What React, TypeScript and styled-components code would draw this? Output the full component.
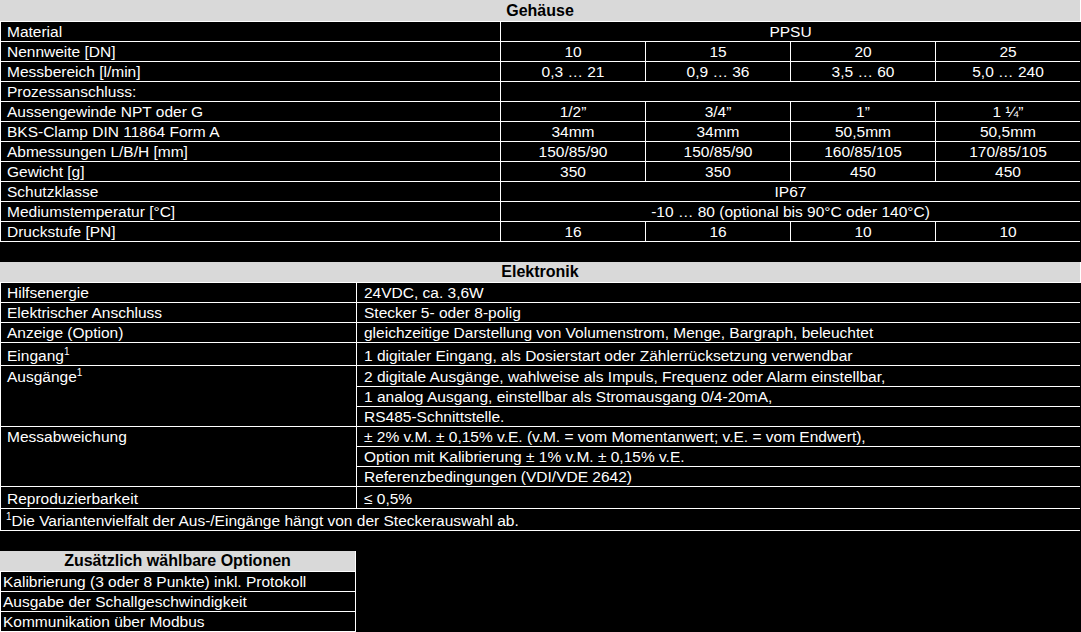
import React, { Fragment } from 'react'
import styled, { createGlobalStyle } from 'styled-components'

const GlobalStyle = createGlobalStyle`
  html, body {
    margin: 0;
    padding: 0;
    background: #000;
  }
  body {
    font-family: 'Liberation Sans', Arial, sans-serif;
    color: #fff;
  }
`

const Sheet = styled.div`
  width: 1081px;
  height: 632px;
  overflow: hidden;
`

const SectionHeader = styled.div<{ $width: number; $height: number }>`
  box-sizing: border-box;
  width: ${({ $width }) => $width}px;
  height: ${({ $height }) => $height + 1}px;
  background: #d9d9d9;
  border-bottom: 1px solid #fff;
  border-right: 1px solid #fff;
  color: #000;
  font-size: 16px;
  font-weight: bold;
  line-height: ${({ $height }) => $height}px;
  text-align: center;
`

const Grid = styled.div<{ $columns: string; $rows: string; $width: number }>`
  box-sizing: border-box;
  display: grid;
  grid-template-columns: ${({ $columns }) => $columns};
  grid-template-rows: ${({ $rows }) => $rows};
  gap: 1px;
  width: ${({ $width }) => $width}px;
  padding-left: 1px;
  border-bottom: 1px solid #fff;
  background: #fff;
`

const OptionsGrid = styled(Grid)`
  padding-right: 1px;
`

// rows taller than 19px keep their text at the bottom, as the sheet does
const Cell = styled.div<{
  $center?: boolean
  $span?: number
  $rowSpan?: number
  $pad?: number
  $shift?: number
}>`
  box-sizing: border-box;
  background: #000;
  font-size: 15.5px;
  line-height: 19px;
  white-space: nowrap;
  overflow: hidden;
  text-align: ${({ $center }) => ($center ? 'center' : 'left')};
  padding-left: ${({ $center, $pad }) => ($center ? 0 : $pad ?? 6)}px;
  padding-top: ${({ $shift }) => $shift ?? 0}px;
  grid-column: span ${({ $span }) => $span ?? 1};
  grid-row: span ${({ $rowSpan }) => $rowSpan ?? 1};
`

const Sup = styled.sup`
  font-size: 10px;
  line-height: 0;
  vertical-align: 6px;
`

const Spacer = styled.div<{ $height: number }>`
  height: ${({ $height }) => $height}px;
`

type HousingRow = [string, ...string[]]

const housing: HousingRow[] = [
  ['Material', 'PPSU'],
  ['Nennweite [DN]', '10', '15', '20', '25'],
  ['Messbereich [l/min]', '0,3 … 21', '0,9 … 36', '3,5 … 60', '5,0 … 240'],
  ['Prozessanschluss:', ''],
  ['Aussengewinde NPT oder G', '1/2”', '3/4”', '1”', '1 ¼”'],
  ['BKS-Clamp DIN 11864 Form A', '34mm', '34mm', '50,5mm', '50,5mm'],
  ['Abmessungen L/B/H [mm]', '150/85/90', '150/85/90', '160/85/105', '170/85/105'],
  ['Gewicht [g]', '350', '350', '450', '450'],
  ['Schutzklasse', 'IP67'],
  ['Mediumstemperatur [°C]', '-10 … 80 (optional bis 90°C oder 140°C)'],
  ['Druckstufe [PN]', '16', '16', '10', '10'],
]

const electronics: { label: string; note?: boolean; shift?: number; values: string[] }[] = [
  { label: 'Hilfsenergie', values: ['24VDC, ca. 3,6W'] },
  { label: 'Elektrischer Anschluss', values: ['Stecker 5- oder 8-polig'] },
  {
    label: 'Anzeige (Option)',
    values: ['gleichzeitige Darstellung von Volumenstrom, Menge, Bargraph, beleuchtet'],
  },
  {
    label: 'Eingang',
    note: true,
    shift: 3,
    values: ['1 digitaler Eingang, als Dosierstart oder Zählerrücksetzung verwendbar'],
  },
  {
    label: 'Ausgänge',
    note: true,
    shift: 1,
    values: [
      '2 digitale Ausgänge, wahlweise als Impuls, Frequenz oder Alarm einstellbar,',
      '1 analog Ausgang, einstellbar als Stromausgang 0/4-20mA,',
      'RS485-Schnittstelle.',
    ],
  },
  {
    label: 'Messabweichung',
    values: [
      '± 2% v.M. ± 0,15% v.E. (v.M. = vom Momentanwert; v.E. = vom Endwert),',
      'Option mit Kalibrierung ± 1% v.M. ± 0,15% v.E.',
      'Referenzbedingungen (VDI/VDE 2642)',
    ],
  },
  { label: 'Reproduzierbarkeit', shift: 2, values: ['≤ 0,5%'] },
]

const options = [
  'Kalibrierung (3 oder 8 Punkte) inkl. Protokoll',
  'Ausgabe der Schallgeschwindigkeit',
  'Kommunikation über Modbus',
]

export default function App() {
  return (
    <Sheet>
      <GlobalStyle />

      <SectionHeader $width={1081} $height={21}>
        Gehäuse
      </SectionHeader>
      <Grid $width={1080} $columns="499px repeat(4, 144px)" $rows="repeat(11, 19px)">
        {housing.map(([label, ...values]) => (
          <Fragment key={label}>
            <Cell>{label}</Cell>
            {values.length === 1 ? (
              <Cell $center $span={4}>
                {values[0]}
              </Cell>
            ) : (
              values.map((value, index) => (
                <Cell $center key={index}>
                  {value}
                </Cell>
              ))
            )}
          </Fragment>
        ))}
      </Grid>
      <Spacer $height={20} />

      <SectionHeader $width={1081} $height={20}>
        Elektronik
      </SectionHeader>
      <Grid
        $width={1080}
        $columns="355px 723px"
        $rows="19px 19px 19px 22px 20px 19px 19px 19px 19px 19px 21px 21px"
      >
        {electronics.map(({ label, note, shift, values }) => (
          <Fragment key={label}>
            <Cell $rowSpan={values.length} $shift={shift}>
              {label}
              {note && <Sup>1</Sup>}
            </Cell>
            {values.map((value, index) => (
              <Cell $pad={7} $shift={index === 0 ? shift : 0} key={index}>
                {value}
              </Cell>
            ))}
          </Fragment>
        ))}
        <Cell $span={2} $pad={5} $shift={2}>
          <Sup>1</Sup>Die Variantenvielfalt der Aus-/Eingänge hängt von der Steckerauswahl ab.
        </Cell>
      </Grid>
      <Spacer $height={20} />

      <SectionHeader $width={356} $height={20}>
        Zusätzlich wählbare Optionen
      </SectionHeader>
      <OptionsGrid $width={356} $columns="354px" $rows="repeat(3, 19px)">
        {options.map((option) => (
          <Cell $pad={2} key={option}>
            {option}
          </Cell>
        ))}
      </OptionsGrid>
    </Sheet>
  )
}
